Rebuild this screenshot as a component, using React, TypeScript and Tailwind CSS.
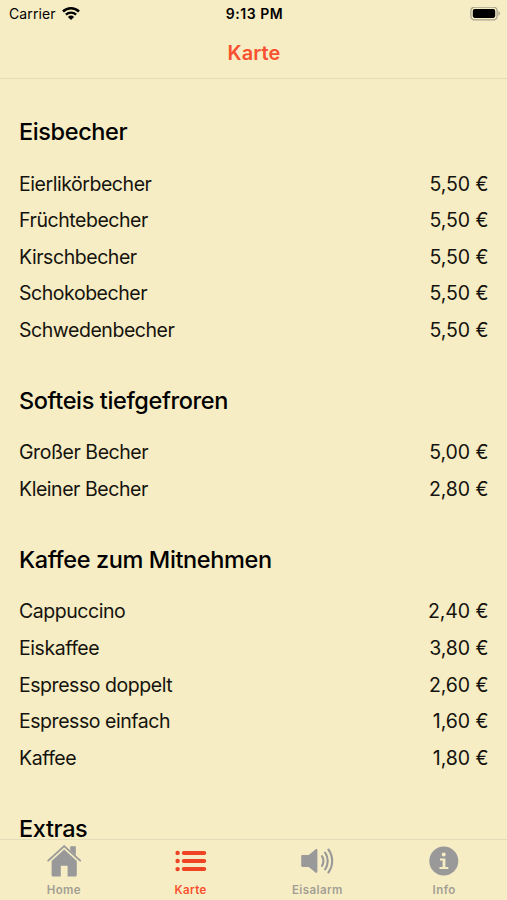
interface MenuItem {
  name: string
  price: string
}

interface MenuSection {
  title: string
  items: MenuItem[]
}

const menu: MenuSection[] = [
  {
    title: 'Eisbecher',
    items: [
      { name: 'Eierlikörbecher', price: '5,50 €' },
      { name: 'Früchtebecher', price: '5,50 €' },
      { name: 'Kirschbecher', price: '5,50 €' },
      { name: 'Schokobecher', price: '5,50 €' },
      { name: 'Schwedenbecher', price: '5,50 €' }
    ]
  },
  {
    title: 'Softeis tiefgefroren',
    items: [
      { name: 'Großer Becher', price: '5,00 €' },
      { name: 'Kleiner Becher', price: '2,80 €' }
    ]
  },
  {
    title: 'Kaffee zum Mitnehmen',
    items: [
      { name: 'Cappuccino', price: '2,40 €' },
      { name: 'Eiskaffee', price: '3,80 €' },
      { name: 'Espresso doppelt', price: '2,60 €' },
      { name: 'Espresso einfach', price: '1,60 €' },
      { name: 'Kaffee', price: '1,80 €' }
    ]
  },
  { title: 'Extras', items: [] }
]

const WifiIcon = () => (
  <svg width="18" height="14" viewBox="0 0 18 14" fill="none" stroke="#000">
    <path d="M1 4.5a11.6 11.6 0 0 1 16 0" strokeWidth="2.6" />
    <path d="M3.9 7.6a7.4 7.4 0 0 1 10.2 0" strokeWidth="2.3" />
    <path d="M9 12.9 5.9 9.9a4.5 4.5 0 0 1 6.2 0Z" fill="#000" stroke="none" />
  </svg>
)

const BatteryIcon = () => (
  <svg width="30" height="14" viewBox="0 0 30 14">
    <rect
      x="0.9"
      y="0.2"
      width="26.2"
      height="12.6"
      rx="3.6"
      fill="none"
      stroke="#a8a38d"
      strokeWidth="1.3"
    />
    <rect x="2.8" y="2.1" width="22.4" height="8.8" rx="1.8" />
    <path d="M28.4 4.3c2 .6 2 3.8 0 4.4Z" fill="#a8a38d" />
  </svg>
)

const HomeIcon = () => (
  <svg width="36" height="34" viewBox="0 0 36 34" fill="#999">
    <path
      d="M3.2 16.6 19.2 2.1l16 14.5"
      fill="none"
      stroke="#999"
      strokeWidth="1.9"
      strokeLinecap="round"
      strokeLinejoin="round"
    />
    <path d="M25.2 2.2h5.6v9.4l-5.6-5Z" />
    <path d="M19.2 5.4 6.6 16.9v14.2c0 .9.6 1.5 1.5 1.5h7.7V21.8h6.8v10.8h7.7c.9 0 1.5-.6 1.5-1.5V16.9Z" />
  </svg>
)

const ListIcon = () => (
  <svg width="36" height="34" viewBox="0 0 36 34" fill="#f04324">
    <circle cx="5.6" cy="8.9" r="2.2" />
    <circle cx="5.6" cy="17" r="2.2" />
    <circle cx="5.6" cy="25.1" r="2.2" />
    <rect x="9.8" y="6.9" width="24.4" height="4" rx="2" />
    <rect x="9.8" y="15" width="24.4" height="4" rx="2" />
    <rect x="9.8" y="23.1" width="24.4" height="4" rx="2" />
  </svg>
)

const SpeakerIcon = () => (
  <svg width="36" height="34" viewBox="0 0 36 34" fill="#999">
    <path d="M3.4 11h6.4l6.6-5.6c.9-.7 2-.2 2 1v21.2c0 1.2-1.1 1.7-2 1L9.8 23H3.4c-.7 0-1.2-.5-1.2-1.2v-9.6c0-.7.5-1.2 1.2-1.2Z" />
    <g fill="none" stroke="#999" strokeWidth="2.1" strokeLinecap="round">
      <path d="M23 12.1c1.9 2.6 1.9 7.2 0 9.8" />
      <path d="M26.1 8.6c3.5 4.8 3.5 12 0 16.8" />
      <path d="M29.4 5.5c5 6.6 5 16.4 0 23" />
    </g>
  </svg>
)

const InfoIcon = () => (
  <svg width="36" height="34" viewBox="0 0 36 34">
    <circle cx="17.8" cy="17" r="14.5" fill="#999" />
    <g fill="#f6edc4">
      <circle cx="17.7" cy="10.4" r="2" />
      <path d="M14 14.4h5.4v8.7h2.9v2h-8.8v-2h3.1v-6.7H14Z" />
    </g>
  </svg>
)

const tabs = [
  { label: 'Home', icon: <HomeIcon />, active: false },
  { label: 'Karte', icon: <ListIcon />, active: true },
  { label: 'Eisalarm', icon: <SpeakerIcon />, active: false },
  { label: 'Info', icon: <InfoIcon />, active: false }
]

const StatusBar = () => (
  <div className="grid h-[27px] grid-cols-3 items-center pl-[9px] pr-[7px] text-[14px] leading-none">
    <div className="flex items-center gap-[6px]">
      <span className="tracking-[0.1px]">Carrier</span>
      <WifiIcon />
    </div>
    <span className="text-center font-semibold tracking-[0.55px]">
      9:13 PM
    </span>
    <div className="flex justify-end">
      <BatteryIcon />
    </div>
  </div>
)

const Section = ({ title, items }: MenuSection) => (
  <section className="mb-[36.9px]">
    <h2 className="mb-[18.8px] text-[23.5px] leading-[30px] font-medium tracking-[-0.38px] whitespace-nowrap">
      {title}
    </h2>
    <ul>
      {items.map(({ name, price }) => (
        <li
          key={name}
          className="flex h-[36.66px] items-center justify-between text-[19.5px] text-[#15130e]">
          <span className="tracking-[-0.45px]">{name}</span>
          <span className="tracking-[-0.05px]">{price}</span>
        </li>
      ))}
    </ul>
  </section>
)

const App = () => {
  return (
    <div className="flex h-[900px] w-[507px] flex-col overflow-hidden bg-[#f6edc4] font-['Inter','Liberation_Sans',sans-serif] text-black">
      <header className="h-[79px] shrink-0 border-b border-[#e4dcb8]">
        <StatusBar />
        <h1 className="pl-px text-center text-[20px] leading-[52px] font-semibold tracking-[0.1px] text-[#f9512f]">
          Karte
        </h1>
      </header>

      <main className="min-h-0 flex-1 overflow-hidden pt-[38px] pr-[18.5px] pl-[19px]">
        {menu.map((section) => (
          <Section key={section.title} {...section} />
        ))}
      </main>

      <nav className="grid h-[61px] shrink-0 grid-cols-4 border-t border-[#e4dcb8] pt-[4px]">
        {tabs.map(({ label, icon, active }) => (
          <div key={label} className="flex flex-col items-center">
            {icon}
            <span
              className={`${
                active ? 'text-[#f9512f]' : 'text-[#a39f94]'
              } mt-[5px] pl-[1px] text-[11.5px] leading-[15px] font-semibold tracking-[0.4px]`}>
              {label}
            </span>
          </div>
        ))}
      </nav>
    </div>
  )
}

export default App
